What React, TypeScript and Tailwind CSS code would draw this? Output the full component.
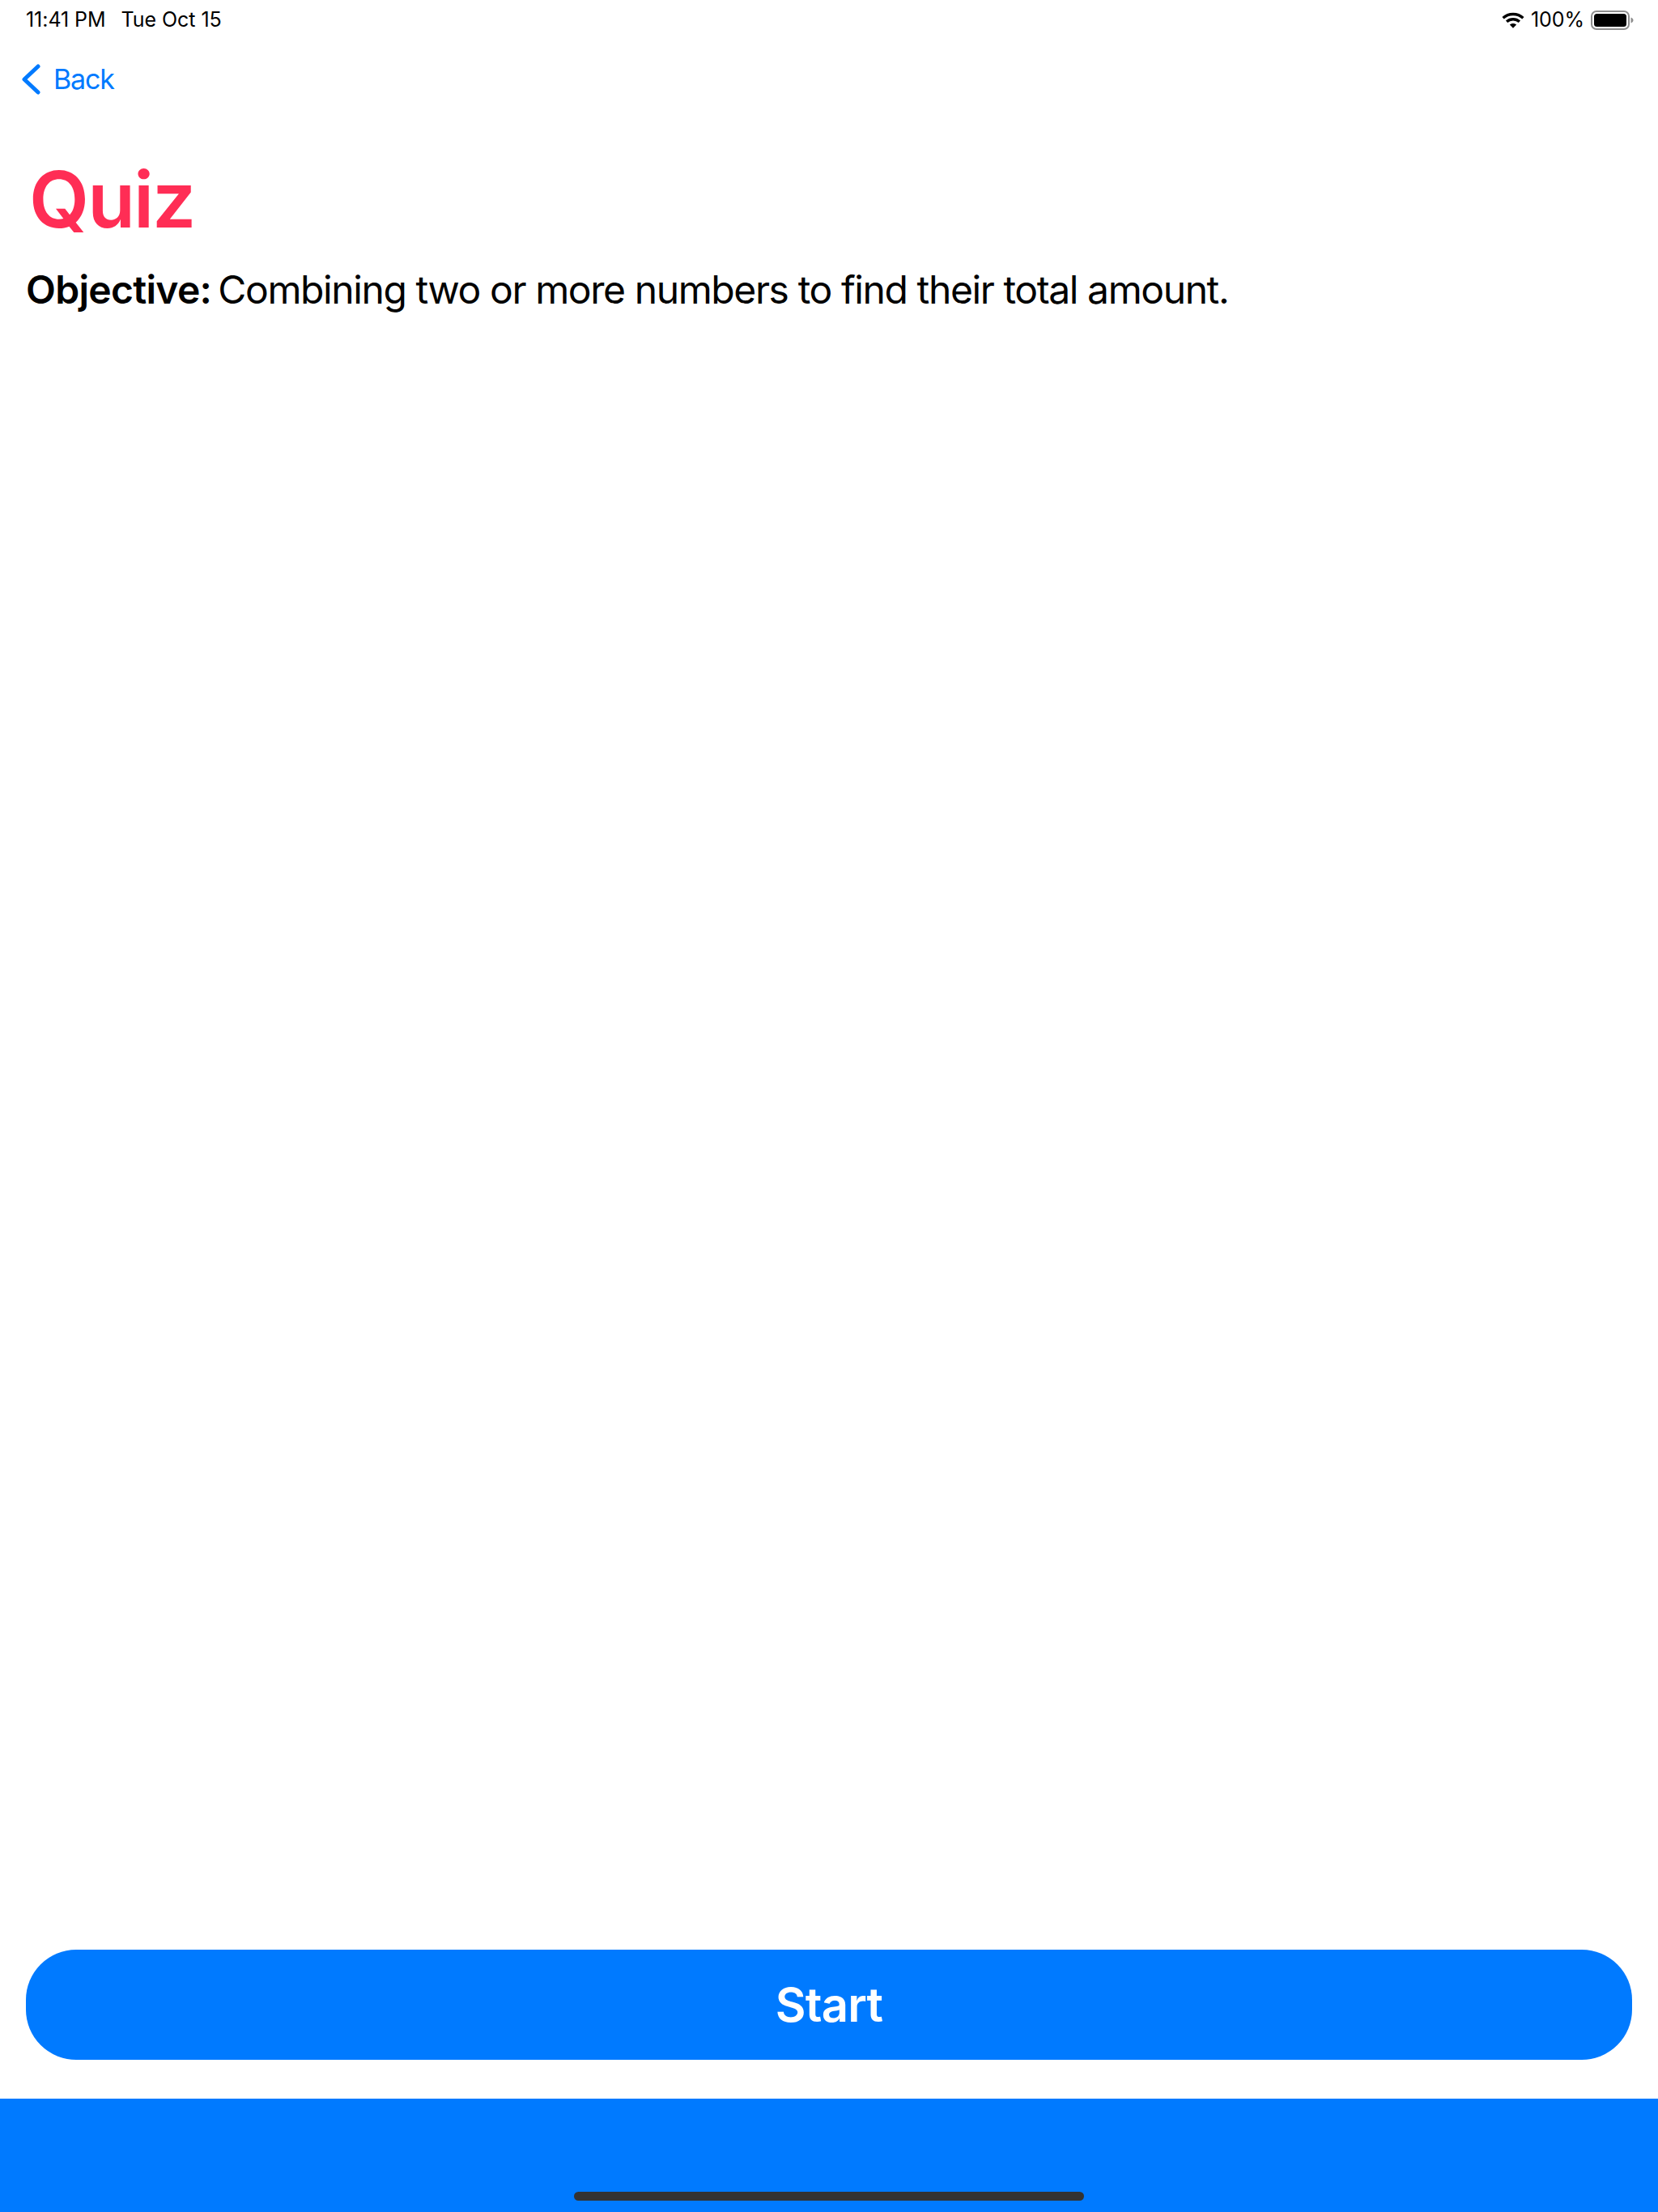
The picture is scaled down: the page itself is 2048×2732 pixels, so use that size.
import React from 'react';

const WifiIcon = () => (
  <svg width="28" height="20" viewBox="0 0 28 20" fill="none" stroke="#000" strokeWidth="3.4">
    <path d="M1.6 7.2C8.4 0.9 19.6 0.9 26.4 7.2" />
    <path d="M6.1 11.8C10.6 7.8 17.4 7.8 21.9 11.8" />
    <path d="M14 19.8L9.9 15.6C12.2 13.6 15.8 13.6 18.1 15.6Z" fill="#000" stroke="none" />
  </svg>
);

const BatteryIcon = () => (
  <svg width="53" height="24" viewBox="0 0 53 24" fill="none">
    <rect x="1" y="1" width="46" height="22" rx="6" stroke="#8e8e8e" strokeWidth="2" />
    <rect x="4" y="4" width="40" height="16" rx="3.5" fill="#000" />
    <path d="M49.5 8.5C51.5 9.2 52.5 10.5 52.5 12C52.5 13.5 51.5 14.8 49.5 15.5Z" fill="#8e8e8e" />
  </svg>
);

const BackChevron = () => (
  <svg width="24" height="38" viewBox="0 0 24 38" fill="none" stroke="#007aff" strokeWidth="5" strokeLinecap="round" strokeLinejoin="round">
    <path d="M21 3L4 19L21 35" />
  </svg>
);

const App: React.FC = () => {
  return (
    <div className="h-[2732px] w-[2048px] bg-white flex flex-col font-['Inter',sans-serif] overflow-hidden">
      {/* status bar */}
      <div className="h-[50px] pl-[32px] pr-[30px] flex items-center justify-between text-[25px] tracking-[-0.05px] text-black">
        <div className="flex gap-[19px]">
          <span>11:41 PM</span>
          <span>Tue Oct 15</span>
        </div>
        <div className="flex items-center gap-[8px]">
          <WifiIcon />
          <span>100%</span>
          <BatteryIcon />
        </div>
      </div>

      <div className="mt-[22px] pl-[26px] flex items-center gap-[16px] text-[34px] tracking-[-1.2px] text-[#007aff]">
        <BackChevron />
        <span>Back</span>
      </div>

      <h1 className="mt-[60px] pl-[36px] text-[96px] tracking-[-2px] leading-[126px] font-semibold text-[#ff2d55]">Quiz</h1>

      <p className="mt-[19px] pl-[32px] text-[48px] tracking-[-1.4px] leading-[60px] text-black">
        <span className="font-semibold tracking-[-0.7px]">Objective:</span>{' '}
        <span className="-ml-[4px]">Combining two or more numbers to find their total amount.</span>
      </p>

      <div className="flex-1" />

      <div className="px-[32px] pb-[48px]">
        <button className="w-full h-[136px] rounded-[62px] bg-[#007aff] text-white text-[58px] tracking-[-0.8px] font-semibold">Start</button>
      </div>

      <div className="h-[140px] bg-[#007aff] flex items-end justify-center pb-[14px]">
        <div className="w-[630px] h-[11px] rounded-full bg-[#333333]" />
      </div>
    </div>
  );
};

export default App;
